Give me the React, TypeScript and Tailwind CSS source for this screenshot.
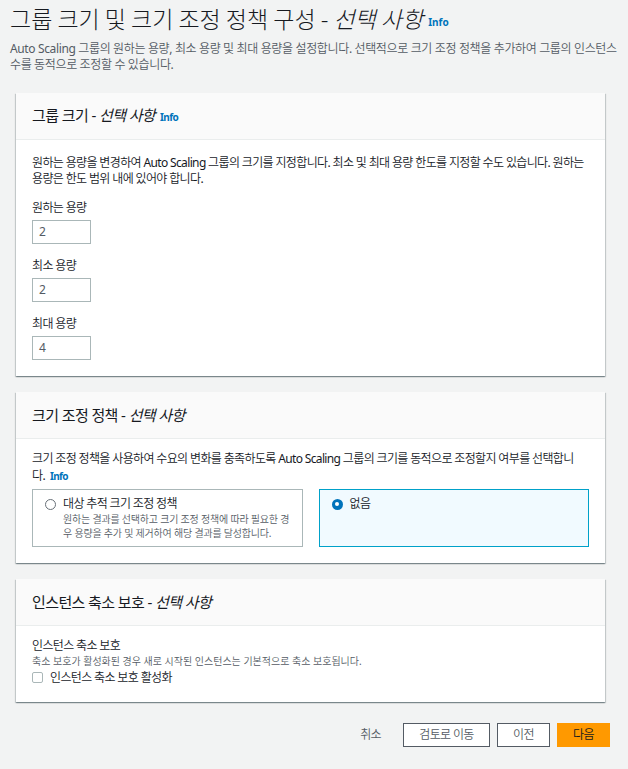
const FONT = "font-['Noto_Sans','Noto_Sans_CJK_KR_DemiLight','Noto_Sans_CJK_KR',sans-serif]";

function Info({ middle = true }: { middle?: boolean }) {
  return (
    <span className={`ml-[5px] text-[10px] font-bold not-italic text-[#0073bb] font-['Noto_Sans',sans-serif] ${middle ? "align-middle" : ""}`}>
      Info
    </span>
  );
}

function CardHeader({ title, info }: { title: string; info?: boolean }) {
  return (
    <div className="flex items-center h-[47px] px-[16px] bg-[#fafafa] border-b border-[#eaeded]">
      <h2 className="text-[15px] leading-[20px] tracking-[-0.04em] text-[#16191f] font-['Noto_Sans','Noto_Sans_CJK_KR',sans-serif]">
        {title} - <i>선택 사항</i>
        {info && <Info />}
      </h2>
    </div>
  );
}

function Card({ children }: { children: React.ReactNode }) {
  return (
    <section className="bg-white ml-[16px] mr-[23px] shadow-[0_1px_1px_0_rgba(0,28,36,0.3),1px_1px_1px_0_rgba(0,28,36,0.15),-1px_1px_1px_0_rgba(0,28,36,0.15)]">
      {children}
    </section>
  );
}

function Field({ label, value }: { label: string; value: string }) {
  return (
    <div className="flex flex-col">
      <label className="text-[12px] leading-[16px] text-[#16191f]">{label}</label>
      <div className="mt-[4px] w-[59px] h-[24px] border border-[#aab7b8] flex items-center px-[6px] text-[12px] text-[#545b64]">
        {value}
      </div>
    </div>
  );
}

export default function App() {
  return (
    <div className={`min-h-screen bg-[#f2f3f3] text-[#16191f] tracking-[-0.04em] ${FONT}`}>
      <div className="px-[10px] pt-[3px]">
        <h1 className="text-[23px] font-light leading-[30px] tracking-normal font-['Noto_Sans_CJK_KR_Light','Noto_Sans_CJK_KR_DemiLight','Noto_Sans_CJK_KR',sans-serif]">
          그룹 크기 및 크기 조정 정책 구성 - <i>선택 사항</i>
          <Info />
        </h1>
        <p className="mt-[4px] text-[12px] leading-[16px] tracking-[-0.03em] text-[#545b64]">
          Auto Scaling 그룹의 원하는 용량, 최소 용량 및 최대 용량을 설정합니다. 선택적으로 크기 조정 정책을 추가하여 그룹의 인스턴스 수를 동적으로 조정할 수 있습니다.
        </p>
      </div>

      <div className="mt-[20px] flex flex-col gap-[16px]">
        <Card>
          <CardHeader title="그룹 크기" info />
          <div className="px-[16px] pt-[15px] pb-[16px]">
            <p className="text-[12px] leading-[16px] text-[#16191f]">
              원하는 용량을 변경하여 Auto Scaling 그룹의 크기를 지정합니다. 최소 및 최대 용량 한도를 지정할 수도 있습니다. 원하는 용량은 한도 범위 내에 있어야 합니다.
            </p>
            <div className="mt-[13px] flex flex-col gap-[14px]">
              <Field label="원하는 용량" value="2" />
              <Field label="최소 용량" value="2" />
              <Field label="최대 용량" value="4" />
            </div>
          </div>
        </Card>

        <Card>
          <CardHeader title="크기 조정 정책" />
          <div className="px-[16px] pt-[11px] pb-[16px]">
            <p className="text-[12px] leading-[17px] text-[#16191f]">
              크기 조정 정책을 사용하여 수요의 변화를 충족하도록 Auto Scaling 그룹의 크기를 동적으로 조정할지 여부를 선택합니다.
              <Info middle={false} />
            </p>
            <div className="mt-[4px] grid grid-cols-2 gap-[16px]">
              <div className="h-[58px] border border-[#aab7b8] px-[12px] pt-[6px] flex gap-[7px]">
                <span className="mt-[3px] w-[11px] h-[11px] rounded-full border border-[#687078] shrink-0" />
                <div>
                  <div className="text-[12px] leading-[16px]">대상 추적 크기 조정 정책</div>
                  <div className="text-[10px] leading-[14px] tracking-[-0.02em] text-[#545b64] break-all">
                    원하는 결과를 선택하고 크기 조정 정책에 따라 필요한 경우 용량을 추가 및 제거하여 해당 결과를 달성합니다.
                  </div>
                </div>
              </div>
              <div className="h-[58px] border border-[#00a1c9] bg-[#f1faff] px-[12px] pt-[6px] flex gap-[7px]">
                <span className="mt-[3px] w-[11px] h-[11px] rounded-full bg-[#0073bb] flex items-center justify-center shrink-0">
                  <span className="w-[4px] h-[4px] rounded-full bg-white" />
                </span>
                <div className="text-[12px] leading-[16px]">없음</div>
              </div>
            </div>
          </div>
        </Card>

        <Card>
          <CardHeader title="인스턴스 축소 보호" />
          <div className="px-[16px] pt-[12px] pb-[16px]">
            <div className="text-[12px] leading-[16px]">인스턴스 축소 보호</div>
            <div className="text-[10px] leading-[14px] tracking-normal text-[#545b64]">
              축소 보호가 활성화된 경우 새로 시작된 인스턴스는 기본적으로 축소 보호됩니다.
            </div>
            <label className="mt-[2px] flex items-center gap-[7px] text-[12px] leading-[16px]">
              <span className="w-[11px] h-[11px] border border-[#aab7b8] rounded-[2px]" />
              인스턴스 축소 보호 활성화
            </label>
          </div>
        </Card>
      </div>

      <div className="mt-[21px] mr-[18px] flex justify-end items-center gap-[7px] text-[12px]">
        <button className="px-[10px] h-[24px] text-[#545b64] mr-[5px]">취소</button>
        <button className="w-[87px] h-[24px] border border-[#545b64] bg-white text-[#545b64]">검토로 이동</button>
        <button className="w-[53px] h-[24px] border border-[#545b64] bg-white text-[#545b64]">이전</button>
        <button className="w-[53px] h-[24px] bg-[#ff9900] text-[#16191f]">다음</button>
      </div>
      <div className="h-[24px]" />
    </div>
  );
}
